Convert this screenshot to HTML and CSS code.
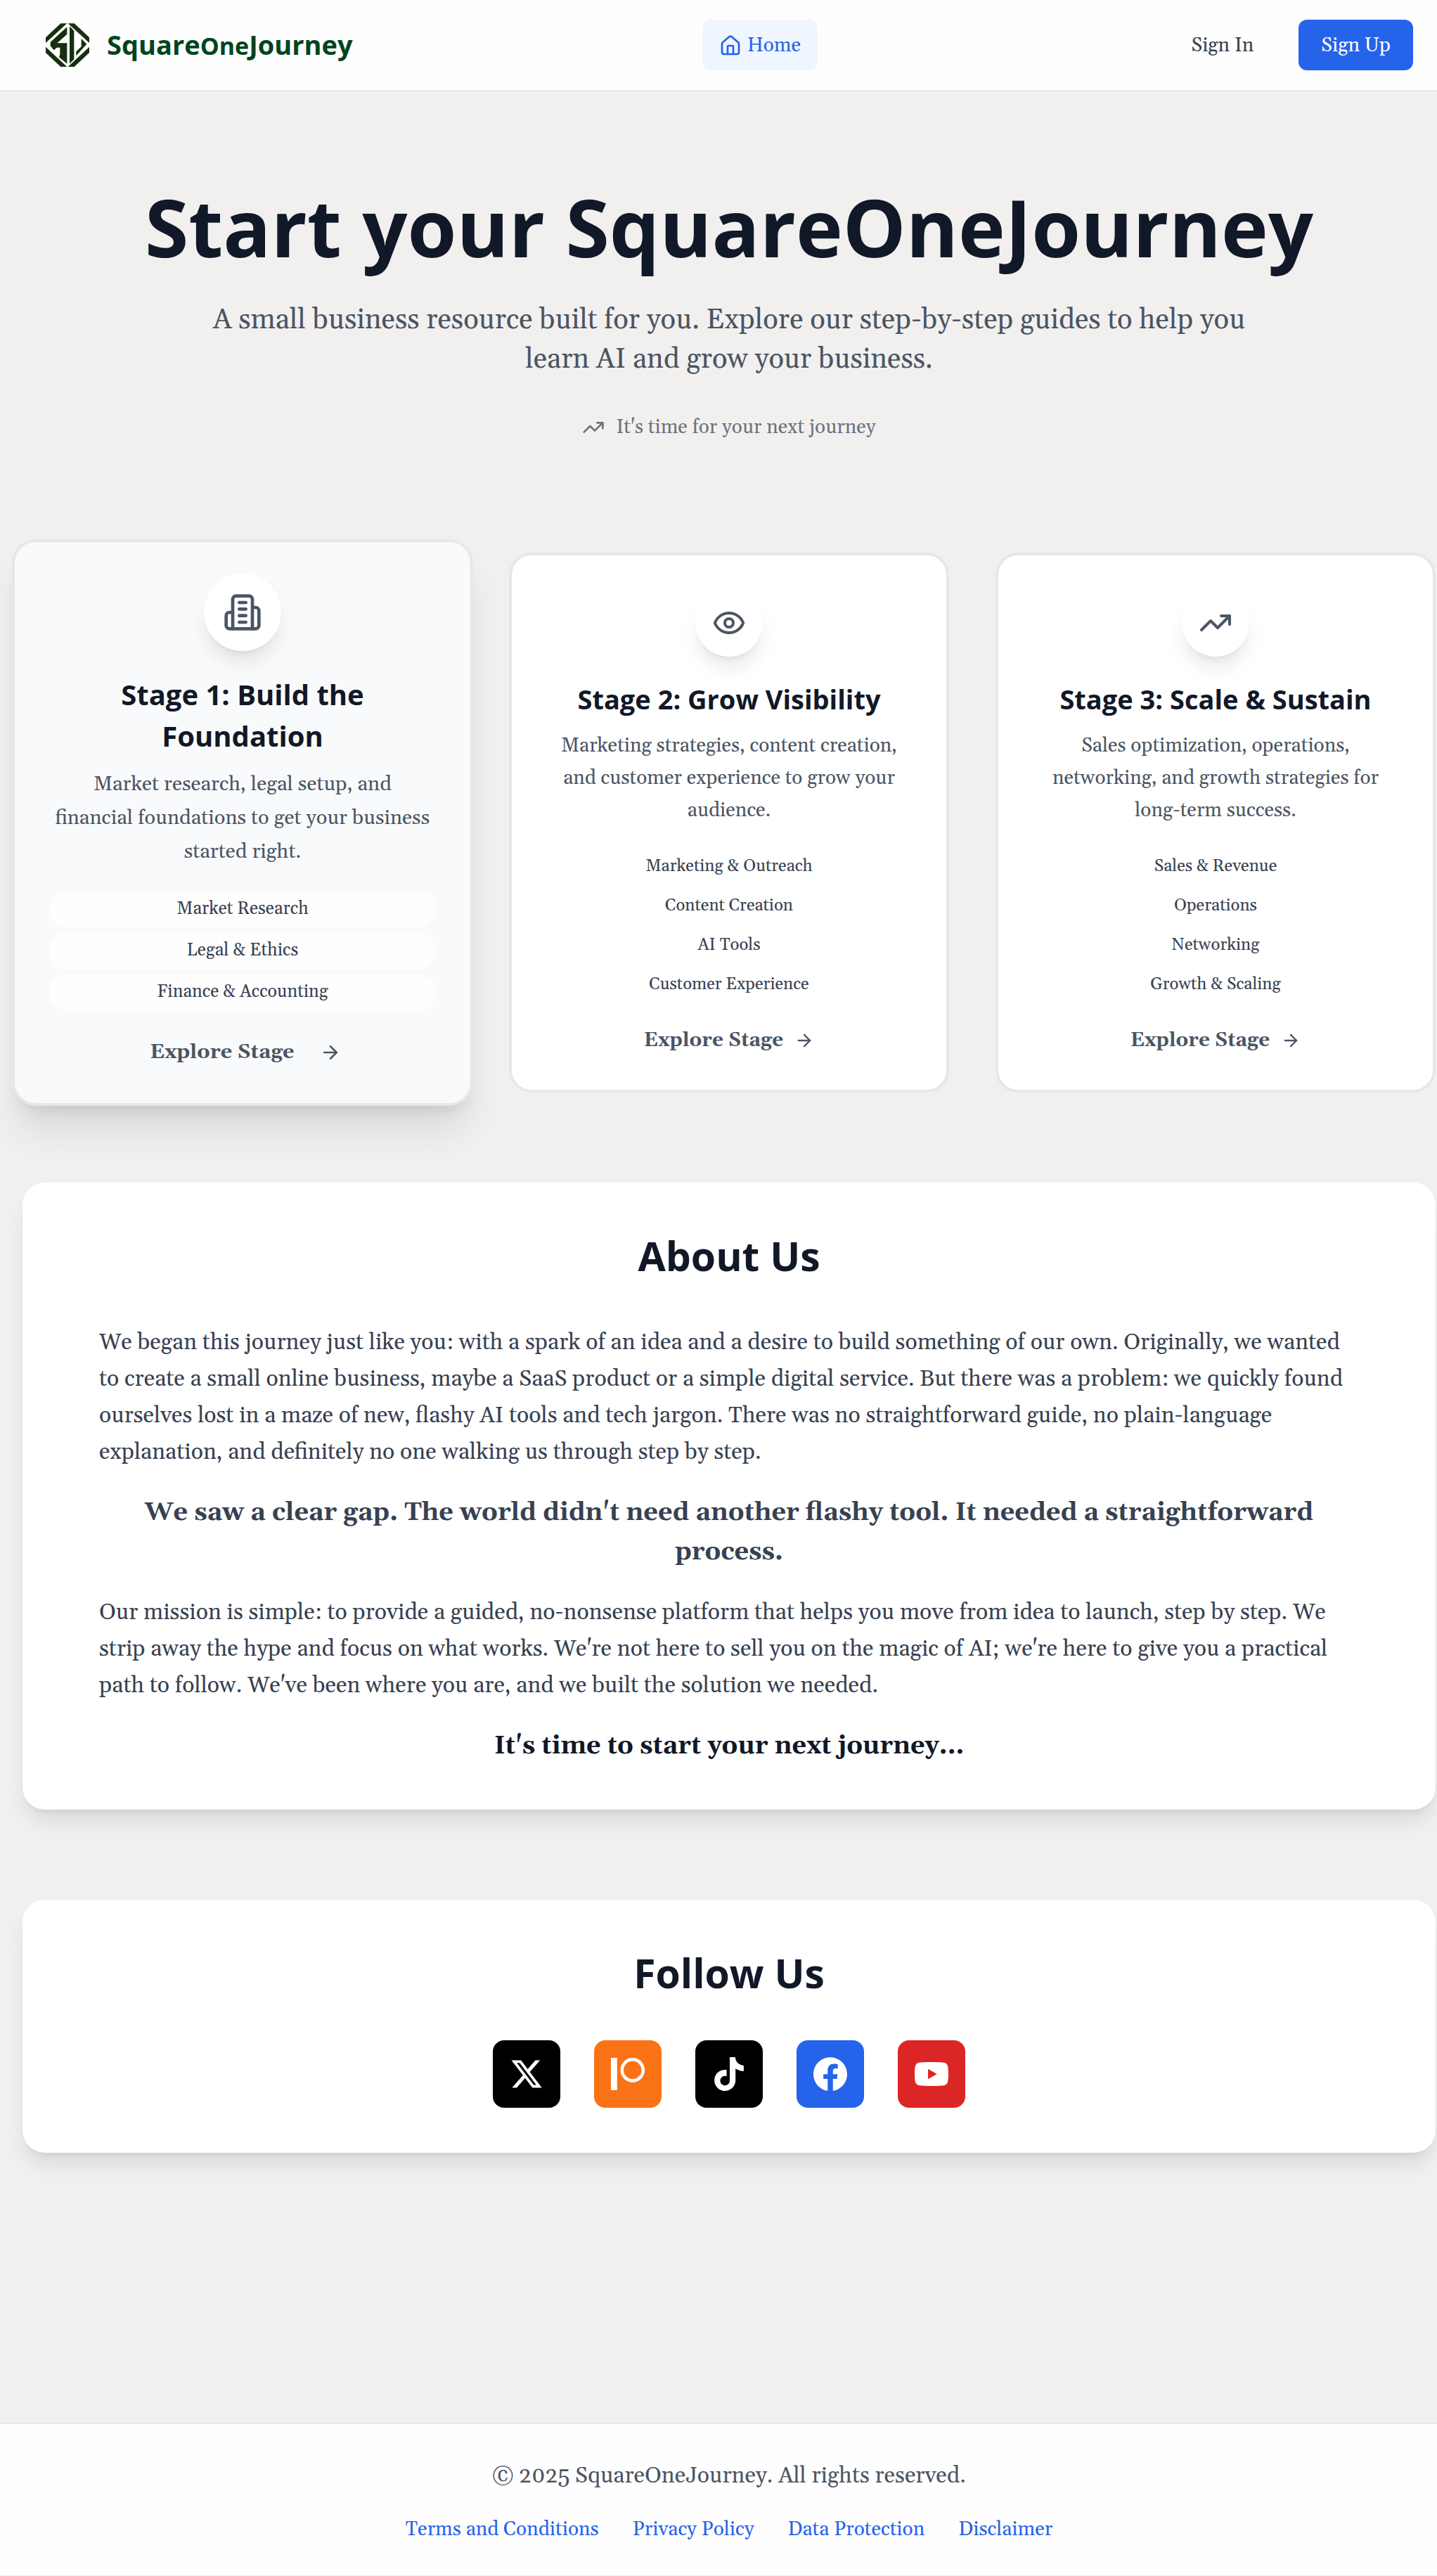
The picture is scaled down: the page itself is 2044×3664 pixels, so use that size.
FILE: index.html
```html
<!DOCTYPE html>
<html lang="en">
<head>
<meta charset="utf-8">
<meta name="viewport" content="width=device-width, initial-scale=1">
<title>SquareOneJourney</title>
<link rel="stylesheet" href="styles.css">
</head>
<body>
<svg class="sprite" aria-hidden="true">
  <symbol id="trend" viewBox="0 0 24 24"><path d="M22 7l-8.500 8.500-5-5L2 17"/><path d="M16 7h6v6"/></symbol>
  <symbol id="arrow" viewBox="0 0 24 24"><path d="M5 12h14"/><path d="m12 5 7 7-7 7"/></symbol>
</svg>

<header class="header">
  <a class="brand" href="#">
    <svg class="brand-mark" viewBox="24 24 192 192" aria-hidden="true">
      <path d="M27 88 91 28H118L27 111ZM122 28H149L213 88V111ZM27 128 118 213H91L27 153ZM213 128 122 213H149L213 153Z"/>
      <path d="M118 43 47 108V124L62 142 74 131H88V160L84 172 118 200V112H76L118 74ZM129 40 148 60V181L129 200ZM179 93 202 116 157 166V148L179 127Z"/>
    </svg>
    <span class="brand-name">Square<span class="brand-small">One</span>Journey</span>
  </a>
  <nav class="nav">
    <a class="nav-link" href="#">
      <svg class="icon icon-nav" viewBox="0 0 24 24" aria-hidden="true"><path d="M15 21v-8a1 1 0 0 0-1-1h-4a1 1 0 0 0-1 1v8"/><path d="M3 10a2 2 0 0 1 .709-1.528l7-5.999a2 2 0 0 1 2.582 0l7 5.999A2 2 0 0 1 21 10v9a2 2 0 0 1-2 2H5a2 2 0 0 1-2-2z"/></svg>
      Home
    </a>
  </nav>
  <div class="account">
    <button class="btn btn-text" type="button">Sign In</button>
    <button class="btn btn-primary" type="button">Sign Up</button>
  </div>
</header>

<main class="main">
  <section class="hero">
    <h1 class="hero-title">Start your SquareOneJourney</h1>
    <p class="hero-lead">A small business resource built for you. Explore our step-by-step guides to help you learn AI and grow your business.</p>
    <p class="hero-note"><svg class="icon icon-nav" aria-hidden="true"><use href="#trend"/></svg>It's time for your next journey</p>
  </section>

  <section class="stages">
    <article class="stage stage-active">
      <div class="stage-badge"><svg class="icon" viewBox="0 0 24 24" aria-hidden="true"><path d="M6 22V4a2 2 0 0 1 2-2h8a2 2 0 0 1 2 2v18Z"/><path d="M6 12H4a2 2 0 0 0-2 2v6a2 2 0 0 0 2 2h2"/><path d="M18 9h2a2 2 0 0 1 2 2v9a2 2 0 0 1-2 2h-2"/><path d="M10 6h4M10 10h4M10 14h4M10 18h4"/></svg></div>
      <h2 class="stage-title">Stage 1: Build the Foundation</h2>
      <p class="stage-text">Market research, legal setup, and financial foundations to get your business started right.</p>
      <ul class="topics">
        <li>Market Research</li>
        <li>Legal &amp; Ethics</li>
        <li>Finance &amp; Accounting</li>
      </ul>
      <a class="explore" href="#">Explore Stage<svg class="icon" aria-hidden="true"><use href="#arrow"/></svg></a>
    </article>
    <article class="stage">
      <div class="stage-badge"><svg class="icon" viewBox="0 0 24 24" aria-hidden="true"><path d="M2.062 12.348a1 1 0 0 1 0-.696 10.750 10.750 0 0 1 19.876 0 1 1 0 0 1 0 .696 10.750 10.750 0 0 1-19.876 0"/><circle cx="12" cy="12" r="3"/></svg></div>
      <h2 class="stage-title">Stage 2: Grow Visibility</h2>
      <p class="stage-text">Marketing strategies, content creation, and customer experience to grow your audience.</p>
      <ul class="topics">
        <li>Marketing &amp; Outreach</li>
        <li>Content Creation</li>
        <li>AI Tools</li>
        <li>Customer Experience</li>
      </ul>
      <a class="explore" href="#">Explore Stage<svg class="icon" aria-hidden="true"><use href="#arrow"/></svg></a>
    </article>
    <article class="stage">
      <div class="stage-badge"><svg class="icon" aria-hidden="true"><use href="#trend"/></svg></div>
      <h2 class="stage-title">Stage 3: Scale &amp; Sustain</h2>
      <p class="stage-text">Sales optimization, operations, networking, and growth strategies for long-term success.</p>
      <ul class="topics">
        <li>Sales &amp; Revenue</li>
        <li>Operations</li>
        <li>Networking</li>
        <li>Growth &amp; Scaling</li>
      </ul>
      <a class="explore" href="#">Explore Stage<svg class="icon" aria-hidden="true"><use href="#arrow"/></svg></a>
    </article>
  </section>

  <section class="panel about">
    <h2 class="panel-title">About Us</h2>
    <div class="about-body">
      <p>We began this journey just like you: with a spark of an idea and a desire to build something of our own. Originally, we wanted to create a small online business, maybe a SaaS product or a simple digital service. But there was a problem: we quickly found ourselves lost in a maze of new, flashy AI tools and tech jargon. There was no straightforward guide, no plain-language explanation, and definitely no one walking us through step by step.</p>
      <p class="callout">We saw a clear gap. The world didn't need another flashy tool. It needed a straightforward process.</p>
      <p>Our mission is simple: to provide a guided, no-nonsense platform that helps you move from idea to launch, step by step. We strip away the hype and focus on what works. We're not here to sell you on the magic of AI; we're here to give you a practical path to follow. We've been where you are, and we built the solution we needed.</p>
      <p class="callout callout-dark">It's time to start your next journey...</p>
    </div>
  </section>

  <section class="panel follow">
    <h2 class="panel-title">Follow Us</h2>
    <div class="socials">
      <a class="social social-x" href="#" aria-label="X"><svg viewBox="0 0 24 24"><path d="M18.244 2.250h3.308l-7.227 8.260 8.502 11.240H16.170l-5.214-6.817L4.990 21.750H1.680l7.730-8.835L1.254 2.250H8.080l4.713 6.231zm-1.161 17.520h1.833L7.084 4.126H5.117z"/></svg></a>
      <a class="social social-patreon" href="#" aria-label="Patreon"><svg viewBox="0 0 24 24"><path d="M0 .5h4.400v23H0z"/><path fill-rule="evenodd" d="M15.400 .5a8.600 8.700 0 1 0 .01 0zM15.400 2.800a6.400 6.400 0 1 1-.01 0z"/></svg></a>
      <a class="social social-tiktok" href="#" aria-label="TikTok"><svg viewBox="0 0 24 24"><path d="M12.525.02c1.310-.02 2.610-.01 3.910-.02.08 1.530.63 3.090 1.750 4.170 1.120 1.110 2.700 1.620 4.240 1.790v4.030c-1.440-.05-2.890-.35-4.200-.97-.57-.26-1.100-.59-1.620-.93-.01 2.920.01 5.840-.02 8.750-.08 1.400-.54 2.790-1.350 3.940-1.310 1.920-3.580 3.170-5.910 3.210-1.430.08-2.860-.31-4.080-1.030-2.020-1.190-3.440-3.370-3.650-5.710-.02-.5-.03-1-.01-1.490.18-1.900 1.120-3.720 2.580-4.960 1.660-1.440 3.980-2.130 6.150-1.720.02 1.480-.04 2.960-.04 4.440-.99-.32-2.150-.23-3.020.37-.63.41-1.110 1.040-1.360 1.750-.21.51-.15 1.070-.14 1.610.24 1.640 1.820 3.020 3.500 2.870 1.120-.01 2.190-.66 2.770-1.610.19-.33.4-.67.41-1.060.1-1.790.06-3.570.07-5.360.01-4.030-.01-8.050.02-12.070z"/></svg></a>
      <a class="social social-facebook" href="#" aria-label="Facebook"><svg viewBox="0 0 24 24"><path d="M24 12.073c0-6.627-5.373-12-12-12s-12 5.373-12 12c0 5.990 4.388 10.954 10.125 11.854v-8.385H7.078v-3.470h3.047V9.430c0-3.007 1.792-4.669 4.533-4.669 1.312 0 2.686.235 2.686.235v2.953H15.830c-1.491 0-1.956.925-1.956 1.874v2.250h3.328l-.532 3.470h-2.796v8.385C19.612 23.027 24 18.062 24 12.073z"/></svg></a>
      <a class="social social-youtube" href="#" aria-label="YouTube"><svg viewBox="0 0 24 24"><path d="M23.498 6.186a3.016 3.016 0 0 0-2.122-2.136C19.505 3.545 12 3.545 12 3.545s-7.505 0-9.377.505A3.017 3.017 0 0 0 .502 6.186C0 8.070 0 12 0 12s0 3.930.502 5.814a3.016 3.016 0 0 0 2.122 2.136c1.871.505 9.376.505 9.376.505s7.505 0 9.377-.505a3.015 3.015 0 0 0 2.122-2.136C24 15.930 24 12 24 12s0-3.930-.502-5.814zM9.545 15.568V8.432L15.818 12l-6.273 3.568z"/></svg></a>
    </div>
  </section>
</main>

<footer class="footer">
  <p class="copyright">© 2025 SquareOneJourney. All rights reserved.</p>
  <nav class="legal">
    <a href="#">Terms and Conditions</a>
    <a href="#">Privacy Policy</a>
    <a href="#">Data Protection</a>
    <a href="#">Disclaimer</a>
  </nav>
</footer>
</body>
</html>
```
FILE: styles.css
```css
:root {
  --serif: "Gelasio", Georgia, "Liberation Serif", serif;
  --sans: "Open Sans", "Noto Sans", sans-serif;
  --ink: #111827;
  --body: #374151;
  --muted: #4b5563;
  --line: #e5e7eb;
  --blue: #2563eb;
}

* { box-sizing: border-box; margin: 0; padding: 0; }

body {
  min-height: 100vh;
  background: #f2f0ef;
  color: var(--body);
  font-family: var(--serif);
  font-size: 28px;
  line-height: 40px;
  overflow-x: hidden;
}

a { color: inherit; text-decoration: none; }
ul { list-style: none; }
button { font: inherit; border: 0; cursor: pointer; }

.sprite { display: none; }

.icon {
  flex: none;
  fill: none;
  stroke: currentColor;
  stroke-width: 2;
  stroke-linecap: round;
  stroke-linejoin: round;
}
.icon-nav { width: 32px; height: 32px; }

/* Header */
.header {
  display: grid;
  grid-template-columns: 1fr auto 1fr;
  align-items: center;
  height: 130px;
  padding: 0 34px 0 64px;
  background: #fefefe;
  border-bottom: 2px solid var(--line);
}
.brand { display: flex; align-items: center; gap: 24px; }
.brand-mark { width: 64px; height: 64px; fill: #16300f; }
.brand-name {
  color: #00441f;
  font: 700 38px/56px var(--sans);
}
.brand-small { font-size: 34px; }
.nav { padding-left: 88px; }
.nav-link {
  display: flex;
  align-items: center;
  gap: 8px;
  height: 72px;
  padding: 2px 24px 0;
  border-radius: 12px;
  background: #eff6ff;
  color: var(--blue);
}
.account { display: flex; justify-content: flex-end; gap: 32px; }
.btn { height: 72px; padding: 2px 32px 0; border-radius: 12px; color: var(--body); background: none; }
.btn-primary { background: var(--blue); color: #fff; }

/* Main column */
.main { padding: 124px 2px 0 32px; }

.hero { display: flex; flex-direction: column; align-items: center; text-align: center; }
.hero-title { color: var(--ink); font: 700 113px/136px var(--sans); }
.hero-lead {
  max-width: 1536px;
  margin-top: 38px;
  color: var(--muted);
  font-size: 40px;
  line-height: 56px;
}
.hero-note {
  display: flex;
  align-items: center;
  gap: 16px;
  margin-top: 48px;
  color: #6b7280;
}

/* Stage cards */
.stages {
  display: grid;
  grid-template-columns: repeat(3, 1fr);
  gap: 66px;
  margin-top: 158px;
}
.stage {
  display: flex;
  flex-direction: column;
  align-items: center;
  padding: 48px 60px 50px;
  border: 4px solid var(--line);
  border-radius: 32px;
  background: #fff;
  text-align: center;
}
.stage-badge {
  display: grid;
  place-items: center;
  width: 96px;
  height: 96px;
  border-radius: 50%;
  background: #fff;
  color: var(--muted);
  box-shadow: 0 20px 30px -6px rgba(0, 0, 0, .1), 0 8px 12px -8px rgba(0, 0, 0, .1);
}
.stage-badge .icon { width: 48px; height: 48px; }
.stage-title {
  margin-top: 32px;
  color: var(--ink);
  font: 700 38px/56px var(--sans);
}
.stage-text { margin-top: 16px; color: var(--muted); line-height: 46px; }
.topics {
  display: flex;
  flex-direction: column;
  align-self: stretch;
  gap: 8px;
  margin-top: 32px;
  font-size: 24px;
  line-height: 32px;
}
.topics li { padding: 8px 24px; border-radius: 24px; background: rgba(255, 255, 255, .8); }
.explore {
  display: flex;
  align-items: center;
  gap: 16px;
  margin-top: 36px;
  color: var(--muted);
  font-weight: 700;
}
.explore .icon { width: 28px; height: 28px; }

/* The highlighted stage grows past its grid cell on every side */
.stage-active {
  margin: -19px -15px;
  padding: 45px 49px;
  border-radius: 34px;
  background: #f9fafb;
  box-shadow: 0 42px 52px -10px rgba(0, 0, 0, .1), 0 16px 20px -12px rgba(0, 0, 0, .1);
}
.stage-active .stage-badge { width: 110px; height: 110px; }
.stage-active .stage-badge .icon { width: 56px; height: 56px; }
.stage-active .stage-title { font-size: 40px; line-height: 59px; }
.stage-active .stage-text { padding: 0 6px; font-size: 29px; line-height: 48px; }
.stage-active .topics { font-size: 25px; line-height: 35px; }
.stage-active .explore { gap: 36px; margin-top: 40px; padding-left: 8px; font-size: 29px; }
.stage-active .explore .icon { width: 30px; height: 30px; }

/* Panels */
.panel {
  border-radius: 32px;
  background: #fff;
  box-shadow: 0 20px 30px -6px rgba(0, 0, 0, .1), 0 8px 12px -8px rgba(0, 0, 0, .1);
}
.panel-title { color: var(--ink); font: 700 57px/80px var(--sans); text-align: center; }
.about { margin-top: 128px; padding: 64px 64px 62px; }
.about-body {
  display: flex;
  flex-direction: column;
  gap: 32px;
  max-width: 1792px;
  margin: 58px auto 0;
  font-size: 32px;
  line-height: 52px;
}
.callout { font-size: 36px; font-weight: 700; line-height: 56px; text-align: center; }
.callout-dark { color: var(--ink); }

.follow { margin-top: 128px; padding: 64px; }
.socials { display: flex; justify-content: center; gap: 48px; margin-top: 56px; }
.social {
  display: grid;
  place-items: center;
  width: 96px;
  height: 96px;
  border-radius: 16px;
  color: #fff;
}
.social svg { width: 48px; height: 48px; fill: currentColor; }
.social-x, .social-tiktok { background: #000; }
.social-patreon { background: #f97316; }
.social-facebook { background: var(--blue); }
.social-youtube { background: #dc2626; }

/* Footer */
.footer {
  display: flex;
  flex-direction: column;
  align-items: center;
  gap: 32px;
  margin-top: 384px;
  padding: 50px 2px 45px 32px;
  border-top: 2px solid var(--line);
  background: #fefefe;
}
.copyright { color: var(--muted); font-size: 32px; line-height: 48px; }
.legal { display: flex; gap: 48px; color: var(--blue); }
```
